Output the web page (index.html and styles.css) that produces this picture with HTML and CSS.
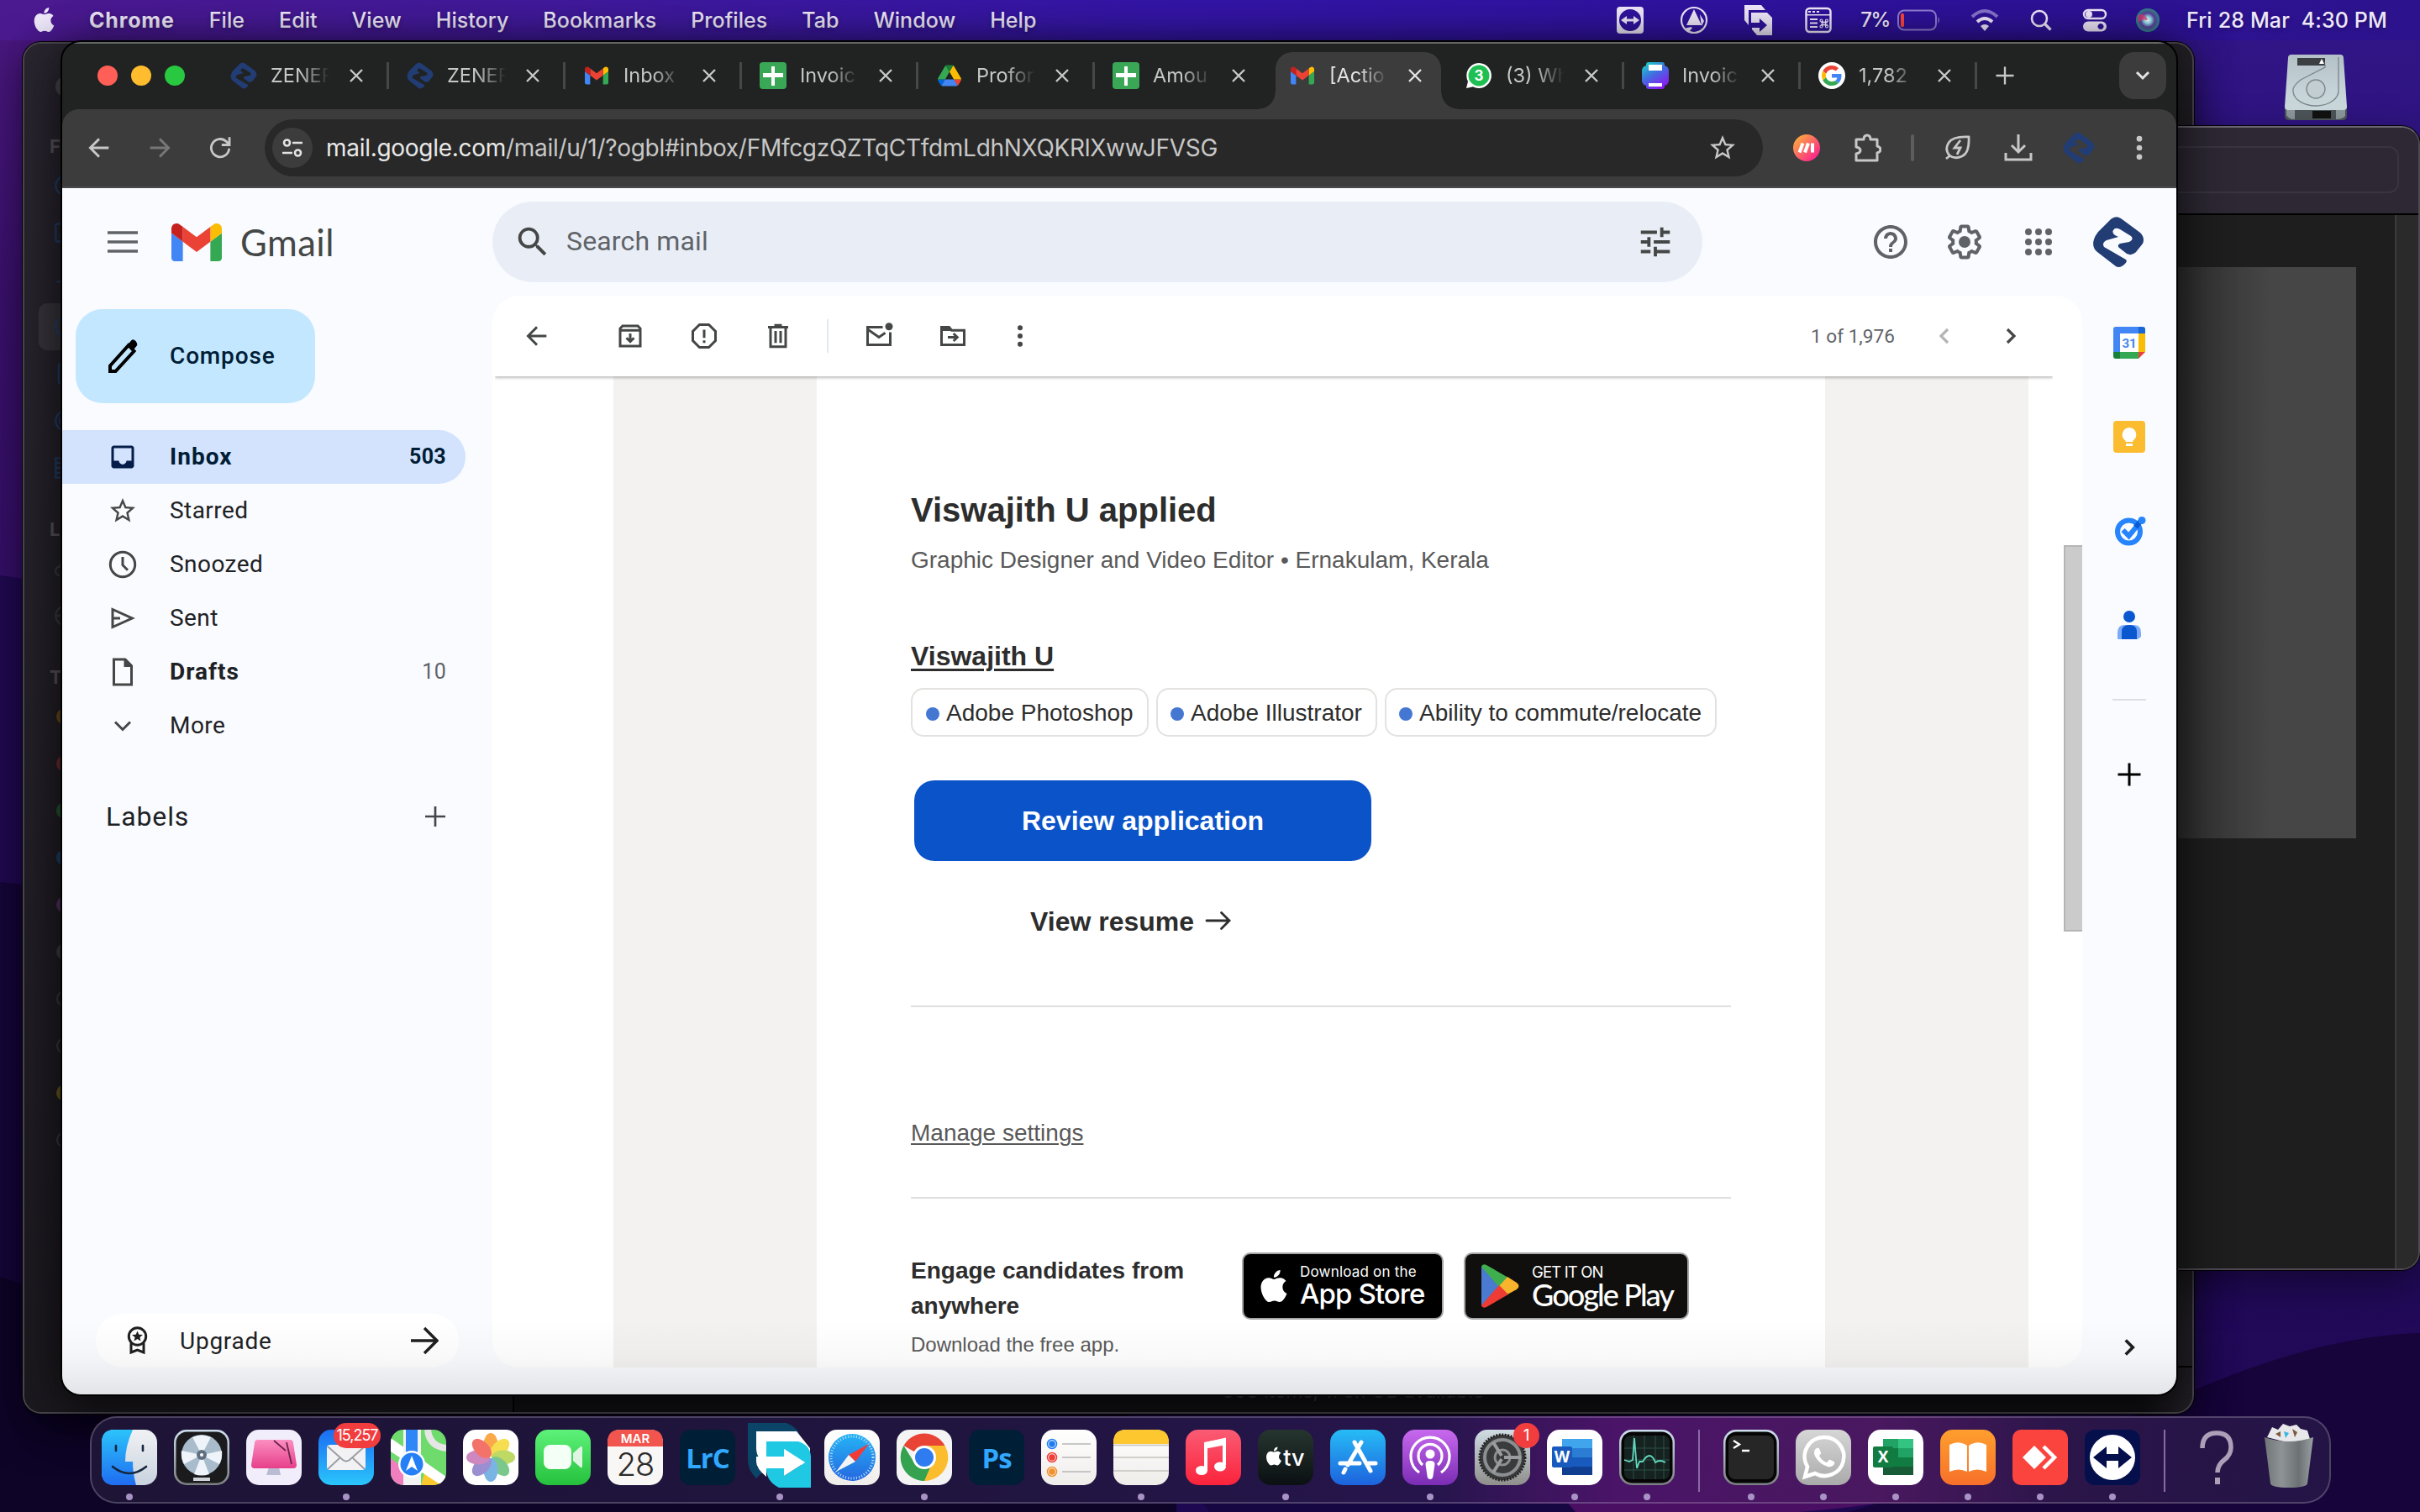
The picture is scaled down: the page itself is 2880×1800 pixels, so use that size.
FILE: index.html
```html
<!DOCTYPE html>
<html lang="en">
<head>
<meta charset="utf-8">
<title>Inbox - Gmail</title>
<link rel="stylesheet" href="styles.css">
</head>
<body>
<svg class="defs" width="0" height="0">
  <defs>
    <linearGradient id="finderBlue" x2="0" y2="1"><stop stop-color="#2bc4fb"/><stop offset="1" stop-color="#1f6cf0"/></linearGradient>
    <linearGradient id="gray" x2="0" y2="1"><stop stop-color="#f0f1f4"/><stop offset="1" stop-color="#c9d3de"/></linearGradient>
    <linearGradient id="white" x2="0" y2="1"><stop stop-color="#fff"/><stop offset="1" stop-color="#efedea"/></linearGradient>
    <linearGradient id="pink" x2="0" y2="1"><stop stop-color="#fb8fc0"/><stop offset="1" stop-color="#e73f8a"/></linearGradient>
    <linearGradient id="mailBlue" x2="0" y2="1"><stop stop-color="#1c6cf2"/><stop offset="1" stop-color="#2ac6fc"/></linearGradient>
    <linearGradient id="green" x2="0" y2="1"><stop stop-color="#5df27a"/><stop offset="1" stop-color="#25c13c"/></linearGradient>
    <linearGradient id="storeBlue" x2="0" y2="1"><stop stop-color="#26bcf6"/><stop offset="1" stop-color="#1d62dd"/></linearGradient>
    <linearGradient id="safari" x2="0" y2="1"><stop stop-color="#25b4f5"/><stop offset="1" stop-color="#2567e0"/></linearGradient>
    <linearGradient id="music" x2="0" y2="1"><stop stop-color="#fb5b74"/><stop offset="1" stop-color="#fa233b"/></linearGradient>
    <linearGradient id="tv" x2="0" y2="1"><stop stop-color="#26352f"/><stop offset="1" stop-color="#0b1012"/></linearGradient>
    <linearGradient id="pod" x2="0" y2="1"><stop stop-color="#c869ee"/><stop offset="1" stop-color="#7a2db4"/></linearGradient>
    <linearGradient id="sys" x2="0" y2="1"><stop stop-color="#d0dce4"/><stop offset="1" stop-color="#8f8f8c"/></linearGradient>
    <linearGradient id="wa" x2="0" y2="1"><stop stop-color="#d6d6d6"/><stop offset="1" stop-color="#aaa"/></linearGradient>
    <linearGradient id="books" x2="0" y2="1"><stop stop-color="#ff9f2e"/><stop offset="1" stop-color="#f7702a"/></linearGradient>
    <linearGradient id="rim" x2="0" y2="1"><stop stop-color="#cfe0ee"/><stop offset="1" stop-color="#7c7f82"/></linearGradient>
    <linearGradient id="trash" x2="1" y2="0"><stop stop-color="#707577"/><stop offset=".35" stop-color="#8e9496"/><stop offset=".7" stop-color="#6c7274"/><stop offset="1" stop-color="#9aa0a2"/></linearGradient>
    <linearGradient id="make" x2="1" y2="1"><stop offset=".1" stop-color="#fdab3d"/><stop offset=".9" stop-color="#fb1f8f"/></linearGradient>
    <linearGradient id="printer" gradientUnits="userSpaceOnUse" x1="0" y1="0" x2="20" y2="32"><stop stop-color="#14e0c4"/><stop offset=".5" stop-color="#3f6fe0"/><stop offset="1" stop-color="#8a1cf0"/></linearGradient>
    <linearGradient id="hdd" x2="0" y2="1"><stop stop-color="#b4c0c7"/><stop offset="1" stop-color="#cfdde1"/></linearGradient>
    <radialGradient id="siri"><stop stop-color="#fff"/><stop offset=".3" stop-color="#8fd8e8"/><stop offset=".6" stop-color="#5a3f9a"/><stop offset="1" stop-color="#2f8a8a"/></radialGradient>
  </defs>
  <symbol id="apple" viewBox="0 0 24 24"><path d="M12.152 6.896c-.948 0-2.415-1.078-3.96-1.04-2.04.027-3.91 1.183-4.961 3.014-2.117 3.675-.546 9.103 1.519 12.09 1.013 1.454 2.208 3.09 3.792 3.039 1.52-.065 2.09-.987 3.935-.987 1.831 0 2.35.987 3.96.948 1.637-.026 2.676-1.48 3.676-2.948 1.156-1.688 1.636-3.325 1.662-3.415-.039-.013-3.182-1.221-3.22-4.857-.026-3.04 2.48-4.494 2.597-4.559-1.429-2.09-3.623-2.324-4.39-2.376-2-.156-3.675 1.09-4.61 1.09zM15.53 3.83c.843-1.012 1.4-2.427 1.245-3.83-1.207.052-2.662.805-3.532 1.818-.78.896-1.454 2.338-1.273 3.714 1.338.104 2.715-.688 3.559-1.701"/></symbol>
  <symbol id="gmail" viewBox="52 42 88 66"><path fill="#4285f4" d="M58 108h14V74L52 59v43c0 3.32 2.69 6 6 6"/><path fill="#34a853" d="M120 108h14c3.32 0 6-2.69 6-6V59l-20 15"/><path fill="#fbbc04" d="M120 48v26l20-15v-8c0-7.42-8.47-11.65-14.4-7.2"/><path fill="#ea4335" d="M72 74V48l24 18 24-18v26L96 92"/><path fill="#c5221f" d="M52 51v8l20 15V48l-5.6-4.2c-5.94-4.45-14.4-.22-14.4 7.2"/></symbol>
  <symbol id="zene" viewBox="0 0 62 62"><path fill="#223c74" fill-rule="evenodd" d="M22 4Q28-1 34 3L57 20Q63 26 60 33L52 43Q47 48 41 45L32 38Q29 35 33 33L44 31Q50 28 46 24L33 16Q27 13 25 17Q23 20 27 23L31 25L17 29Q11 32 14 37L40 52Q42 54 39 57Q33 63 28 60L6 43Q-1 37 2 28Q3 24 7 19Z"/></symbol>
  <symbol id="sheets" viewBox="0 0 32 32"><rect width="32" height="32" rx="4" fill="#3aa757"/><path fill="#fff" d="M14 5h4v8h10v5H18v10h-4V18H4v-5h10z"/></symbol>
  <symbol id="drive" viewBox="0 0 87.3 78"><path fill="#0066da" d="m6.6 66.85 3.85 6.65c.8 1.4 1.95 2.5 3.3 3.3l13.75-23.8h-27.5c0 1.55.4 3.1 1.2 4.5z"/><path fill="#34a853" d="m43.65 25-13.75-23.8c-1.35.8-2.5 1.9-3.3 3.3l-25.4 44a9.06 9.06 0 0 0 -1.2 4.5h27.5z"/><path fill="#ea4335" d="m73.55 76.8c1.35-.8 2.5-1.9 3.3-3.3l1.6-2.75 7.65-13.25c.8-1.4 1.2-2.95 1.2-4.5h-27.5l5.85 11.5z"/><path fill="#188038" d="m43.65 25 13.75-23.8c-1.35-.8-2.9-1.2-4.5-1.2h-18.5c-1.6 0-3.15.45-4.5 1.2z"/><path fill="#4285f4" d="m59.8 53h-32.3l-13.75 23.8c1.35.8 2.9 1.2 4.5 1.2h50.8c1.6 0 3.15-.45 4.5-1.2z"/><path fill="#fbbc04" d="m73.4 26.5-12.7-22c-.8-1.4-1.95-2.5-3.3-3.3l-13.75 23.8 16.15 28h27.45c0-1.55-.4-3.1-1.2-4.5z"/></symbol>
  <symbol id="google" viewBox="0 0 48 48"><path fill="#ea4335" d="M24 9.5c3.54 0 6.71 1.22 9.21 3.6l6.85-6.85C35.9 2.38 30.47 0 24 0 14.62 0 6.51 5.38 2.56 13.22l7.98 6.19C12.43 13.72 17.74 9.5 24 9.5z"/><path fill="#4285f4" d="M46.98 24.55c0-1.57-.15-3.09-.38-4.55H24v9.02h12.94c-.58 2.96-2.26 5.48-4.78 7.18l7.73 6c4.51-4.18 7.09-10.36 7.09-17.65z"/><path fill="#fbbc05" d="M10.53 28.59c-.48-1.45-.76-2.99-.76-4.59s.27-3.14.76-4.59l-7.98-6.19C.92 16.46 0 20.12 0 24c0 3.88.92 7.54 2.56 10.78l7.97-6.19z"/><path fill="#34a853" d="M24 48c6.48 0 11.93-2.13 15.89-5.81l-7.73-6c-2.15 1.45-4.92 2.3-8.16 2.3-6.26 0-11.57-4.22-13.47-9.91l-7.98 6.19C6.51 42.62 14.62 48 24 48z"/></symbol>
  <symbol id="x" viewBox="0 0 16 16"><path d="M1 1l14 14M15 1L1 15" stroke="currentColor" stroke-width="2.4" fill="none"/></symbol>
  <symbol id="back" viewBox="0 0 24 24"><path d="M20 12H5M12 4.5L4.5 12l7.5 7.5" stroke="currentColor" stroke-width="2" fill="none"/></symbol>
  <symbol id="star" viewBox="0 0 24 24"><path fill="currentColor" d="M22 9.24l-7.19-.62L12 2 9.19 8.63 2 9.24l5.46 4.73L5.82 21 12 17.27 18.18 21l-1.63-7.03L22 9.24zM12 15.4l-3.76 2.27 1-4.28-3.32-2.88 4.38-.38L12 6.1l1.71 4.04 4.38.38-3.32 2.88 1 4.28L12 15.4z"/></symbol>
  <symbol id="dots" viewBox="0 0 24 24"><g fill="currentColor"><circle cx="12" cy="5.5" r="2"/><circle cx="12" cy="12" r="2"/><circle cx="12" cy="18.5" r="2"/></g></symbol>
  <symbol id="plus" viewBox="0 0 24 24"><path d="M12 3v18M3 12h18" stroke="currentColor" stroke-width="2" fill="none"/></symbol>
  <symbol id="phone" viewBox="0 0 24 24"><path d="M17.47 14.38c-.3-.15-1.76-.87-2.03-.97-.27-.1-.47-.15-.67.15-.2.3-.77.97-.94 1.16-.17.2-.35.22-.64.08-.3-.15-1.26-.46-2.39-1.48-.88-.79-1.48-1.76-1.65-2.06-.17-.3-.02-.46.13-.6.13-.14.3-.35.45-.52.15-.17.2-.3.3-.5.1-.2.05-.37-.03-.52-.07-.15-.67-1.61-.92-2.21-.24-.58-.49-.5-.67-.51h-.57c-.2 0-.52.07-.79.37-.27.3-1.04 1.02-1.04 2.48s1.07 2.88 1.21 3.07c.15.2 2.1 3.2 5.08 4.49.71.3 1.26.49 1.69.63.71.23 1.36.19 1.87.12.57-.09 1.76-.72 2.01-1.41.25-.69.25-1.29.17-1.41-.07-.12-.27-.2-.57-.35z"/></symbol>
</svg>

<svg class="wallpaper" viewBox="0 0 2880 1800" preserveAspectRatio="none">
  <defs><linearGradient id="wp" x2="0" y2="1"><stop stop-color="#4a1880"/><stop offset=".2" stop-color="#3a116c"/><stop offset="1" stop-color="#25085a"/></linearGradient>
  <linearGradient id="wr" x2="0" y2="1"><stop stop-color="#311587"/><stop offset="1" stop-color="#1f0852"/></linearGradient></defs>
  <rect width="2880" height="1800" fill="url(#wp)"/>
  <path fill="#200a50" d="M0 685q60 8 200 30V1800H0z"/>
  <path fill="#150638" d="M0 1050l200 20V1800H0z"/>
  <rect x="1400" width="1480" height="1800" fill="url(#wr)"/>
  <path fill="#0e0427" d="M0 1520q200 60 500 280H0zM0 1680h1400v120H0z"/>
  <path fill="#160642" d="M1340 1680h600v120h-500z"/>
  <path fill="#16043a" d="M2880 1587Q2760 1590 2600 1660T2200 1800H2880z"/>
  <path fill="#4a0f63" d="M1840 1760h500q-60 30-200 40h-265z"/>
</svg>

<header class="menubar">
  <nav class="menus"><svg class="apple-mark"><use href="#apple"/></svg><b>Chrome</b><span>File</span><span>Edit</span><span>View</span><span>History</span><span>Bookmarks</span><span>Profiles</span><span>Tab</span><span>Window</span><span>Help</span></nav>
  <div class="status">
    <svg width="34" height="34" viewBox="0 0 34 34"><path fill-rule="evenodd" d="M5 1h24q4 0 4 4v24q0 4-4 4H5q-4 0-4-4V5q0-4 4-4zM17 4a13 13 0 1 0 0 26 13 13 0 1 0 0-26zM6 17l7-5v3.5h8V12l7 5-7 5v-3.5h-8V22z"/></svg>
    <svg width="34" height="34" viewBox="0 0 34 34"><circle cx="17" cy="17" r="15" fill="none" stroke="#eee8fa" stroke-width="2.2"/><path d="M17 4l9 19H8zM6 27q8-3 9-1l-4 5zM24 10l5 8-3 6z"/></svg>
    <svg width="36" height="38" viewBox="0 0 36 38"><path d="M2 1h20l5 6H7v18l-5-6z"/><path fill-rule="evenodd" d="M10 10h19l6 6v21H17l-6-7V28h9v5l9-8-9-8v5H10z"/></svg>
    <svg width="32" height="32" viewBox="0 0 32 32"><rect x="1.5" y="2" width="29" height="28" rx="4" fill="none" stroke="#eee8fa" stroke-width="2.5"/><path d="M4 5h3v2H4zM9 5h3v2H9zM14 5h3v2h-3zM2 9h28v1.500H2zM6 14h9v2H6zM6 18.500h9v2H6zM6 23h9v2H6z"/><path fill="none" stroke="#eee8fa" stroke-width="1.300" d="M21 17v6M24.500 17v6M19 18.500h8M19 21.500h8"/><g fill="none" stroke="#eee8fa" stroke-width="1.200"><circle cx="19.500" cy="16.500" r="1.500"/><circle cx="26" cy="16.500" r="1.500"/><circle cx="19.500" cy="23.500" r="1.500"/><circle cx="26" cy="23.500" r="1.500"/></g></svg>
    <span class="pct">7%</span>
    <svg width="52" height="26" viewBox="0 0 52 26"><rect x="1" y="1.5" width="45" height="23" rx="7" fill="none" stroke="#8f7cd0" stroke-width="2"/><rect x="4" y="5" width="4" height="16" rx="1.5" fill="#ff453a"/><path fill="#8f7cd0" d="M48.5 9q3 4 0 8z"/></svg>
    <svg width="36" height="28" viewBox="0 0 36 28"><g fill="none" stroke-width="4"><path stroke="#8573cc" d="M3 10q15-14 30 0"/><path stroke="#eee8fa" d="M9 16q9-8 18 0"/></g><path d="M13 21q5-4 10 0l-5 6z"/></svg>
    <svg width="28" height="28" viewBox="0 0 28 28"><circle cx="12" cy="12" r="9" fill="none" stroke="#eee8fa" stroke-width="2.6"/><path d="M18.5 18.5l7 7" stroke="#eee8fa" stroke-width="3.2"/></svg>
    <svg width="30" height="28" viewBox="0 0 30 28"><rect x="2" y="2" width="26" height="10" rx="5" fill="none" stroke="#eee8fa" stroke-width="2.4"/><circle cx="8" cy="7" r="4"/><path fill-rule="evenodd" d="M7 15.5h16a6 6 0 0 1 0 12H7a6 6 0 0 1 0-12zM22 18a3.5 3.5 0 1 0 .01 0z"/></svg>
    <svg width="30" height="30" viewBox="0 0 30 30"><circle cx="15" cy="15" r="14" fill="url(#siri)"/><path fill="#e8356b" opacity=".7" d="M3 10q8-6 12 5-8-2-11 3z"/></svg>
    <time>Fri 28 Mar&nbsp; 4:30 PM</time>
  </div>
</header>

<svg class="hdd" viewBox="0 0 76 80"><path fill="#4d565a" d="M1 62h74v12q0 5-5 5H6q-5 0-5-5z"/><path fill="#8d999e" d="M3 66h10v12q-8 0-10-5zM62 66h11v8q-3 4-11 4z"/><path fill="#111" d="M34 68h22v9H34z"/><path fill="url(#hdd)" d="M9 1h58q4 0 4 4l4 58q0 4-4 4H5q-4 0-4-4L5 5q0-4 4-4z"/><rect x="16" y="5" width="33" height="9" fill="#3b3f42"/><path fill="#fff" d="M45 6l3 6h-6z"/><g fill="none" stroke="#7e898f" stroke-width="1.4"><path d="M49 13v3L20 31Q9 40 11 45a27 18 0 0 0 54-2V4"/><circle cx="38" cy="42" r="11" fill="#c3ced3"/></g></svg>

<section class="window finder">
  <aside class="finder-side">
    <i class="tl"></i>
    <h6>Favourites</h6>
    <p><svg viewBox="0 0 24 24"><circle cx="12" cy="12" r="10"/></svg></p><p><svg viewBox="0 0 24 24"><rect x="2" y="3" width="20" height="18" rx="2"/><path d="M6 15h12"/></svg></p><p><svg viewBox="0 0 24 24"><path d="M3 14h10l6 5M12 6v8"/></svg></p><p class="on"><svg viewBox="0 0 24 24"><circle cx="12" cy="12" r="10"/></svg></p><p><svg viewBox="0 0 24 24"><rect x="5" y="2" width="15" height="20" rx="2"/></svg></p><p><svg viewBox="0 0 24 24"><circle cx="12" cy="12" r="10"/><circle cx="12" cy="12" r="6"/></svg></p><p><svg viewBox="0 0 24 24"><path d="M2 2h20v20H2zM8 2v20M2 7h6M2 12h6M2 17h6"/></svg></p>
    <h6>Locations</h6>
    <p class="dim"><svg viewBox="0 0 24 24"><path d="M6 19q-5-1-4-6 1-3 4-3 2-7 9-5"/></svg></p><p class="dim"><svg viewBox="0 0 24 24"><circle cx="12" cy="12" r="10"/><path d="M2 12h20M12 2q-8 10 0 20"/></svg></p>
    <h6>Tags</h6>
    <p><i class="tag t1"></i></p><p><i class="tag t2"></i></p><p><i class="tag t3"></i></p><p><i class="tag t4"></i></p><p><i class="tag t5"></i></p><p><i class="tag t6"></i></p><p><i class="tag t0"></i></p><p><i class="tag t0"></i></p><p><i class="tag t7"></i></p><p><i class="tag t0"></i></p>
  </aside>
  <div class="finder-status">503 items, 170.1 GB available</div>
</section>

<section class="window preview">
  <div class="preview-bar"><div class="preview-field"></div></div>
  <div class="preview-body"><div class="preview-page"></div><div class="preview-scroll"></div></div>
</section>

<main class="window chrome">
  <div class="tabstrip">
    <div class="lights"><i></i><i></i><i></i></div>
    <div class="tab"><svg><use href="#zene"/></svg><span>ZENER</span><svg class="x"><use href="#x"/></svg></div>
    <div class="tab"><svg><use href="#zene"/></svg><span>ZENER</span><svg class="x"><use href="#x"/></svg></div>
    <div class="tab"><svg class="sm"><use href="#gmail"/></svg><span>Inbox</span><svg class="x"><use href="#x"/></svg></div>
    <div class="tab"><svg><use href="#sheets"/></svg><span>Invoic</span><svg class="x"><use href="#x"/></svg></div>
    <div class="tab"><svg class="sm"><use href="#drive"/></svg><span>Profor</span><svg class="x"><use href="#x"/></svg></div>
    <div class="tab nosep"><svg><use href="#sheets"/></svg><span>Amou</span><svg class="x"><use href="#x"/></svg></div>
    <div class="tab active"><svg class="sm"><use href="#gmail"/></svg><span>[Actio</span><svg class="x"><use href="#x"/></svg></div>
    <div class="tab"><svg viewBox="0 0 32 32"><path fill="#fff" d="M16 1a15 15 0 1 1-7 28.3L1 31l2-8A15 15 0 0 1 16 1z"/><circle cx="16" cy="16" r="12.5" fill="#1fbf53"/><text x="16" y="22" class="badge-n">3</text></svg><span>(3) Wh</span><svg class="x"><use href="#x"/></svg></div>
    <div class="tab"><svg viewBox="0 0 32 32"><rect y="4" width="32" height="24" rx="6" fill="url(#printer)"/><rect x="5" y="0" width="22" height="32" rx="3" fill="url(#printer)"/><path fill="#fff" d="M8 3h16v7H8zM8 25h16v4H8z"/></svg><span>Invoic</span><svg class="x"><use href="#x"/></svg></div>
    <div class="tab"><svg viewBox="0 0 32 32"><circle cx="16" cy="16" r="16" fill="#fff"/><use href="#google" x="4" y="4" width="24" height="24"/></svg><span>1,782</span><svg class="x"><use href="#x"/></svg></div>
    <svg class="newtab"><use href="#plus"/></svg>
    <div class="tabdrop"><svg width="20" height="12" viewBox="0 0 20 12"><path d="M3 2l7 7 7-7" fill="none" stroke="#e3e3e3" stroke-width="3"/></svg></div>
  </div>
  <div class="toolbar">
    <div class="tb"><svg><use href="#back"/></svg></div>
    <div class="tb off"><svg class="flip"><use href="#back"/></svg></div>
    <div class="tb"><svg viewBox="0 0 24 24"><path d="M19.500 12.500a7.500 7.500 0 1 1-2.300-5.800L19.500 9M19.800 3v6.500h-6.500" fill="none" stroke="currentColor" stroke-width="2"/></svg></div>
    <div class="omnibox">
      <div class="site"><svg width="26" height="26" viewBox="0 0 26 26"><g fill="none" stroke="#e3e3e3" stroke-width="2.6"><circle cx="6.5" cy="7" r="3.5"/><path d="M13 7h12M1 19h12"/><circle cx="19.5" cy="19" r="3.5"/></g></svg></div>
      <span class="url"><b>mail.google.com</b>/mail/u/1/?ogbl#inbox/FMfcgzQZTqCTfdmLdhNXQKRlXwwJFVSG</span>
      <svg class="bm"><use href="#star"/></svg>
    </div>
    <div class="tb first"><svg class="mk" viewBox="0 0 32 32"><circle cx="16" cy="16" r="16" fill="url(#make)"/><path d="M7.500 21.500l4-11M14 21.500l4-11M23 21.500v-11" stroke="#fff" stroke-width="4"/></svg></div>
    <div class="tb"><svg viewBox="0 0 34 34"><path fill="none" stroke="currentColor" stroke-width="3" stroke-linejoin="round" d="M4 7h9q0-5 4-5t4 5h8v8q4 1 4 4t-4 4v9H4v-8q5-1 5-4t-5-4z"/></svg></div>
    <div class="vsep"></div>
    <div class="tb"><svg viewBox="0 0 34 34"><g fill="none" stroke="currentColor" stroke-width="2.8"><path d="M30 4Q11 3 6 11t1 15q6 5 15 1T30 4zM3 30l5-4"/><path d="M20 8l-7 9h7l-4 8"/></g></svg></div>
    <div class="tb"><svg viewBox="0 0 34 34"><path fill="none" stroke="currentColor" stroke-width="3" d="M17 1v21M9 14l8 8 8-8M2 23v8h30v-8"/></svg></div>
    <div class="tb"><svg class="zb"><use href="#zene"/></svg></div>
    <div class="tb"><svg class="kebab"><use href="#dots"/></svg></div>
  </div>

  <div class="gmail">
    <div class="head">
      <svg class="burger" viewBox="0 0 36 26"><path d="M0 2h36M0 13h36M0 24h36" stroke="#5f6368" stroke-width="3.4"/></svg>
      <svg class="logo"><use href="#gmail"/></svg>
      <span class="brand">Gmail</span>
      <div class="search"><svg viewBox="0 0 24 24"><path d="M15.5 14h-.79l-.28-.27A6.471 6.471 0 0 0 16 9.5 6.5 6.5 0 1 0 9.5 16c1.61 0 3.09-.59 4.23-1.57l.27.28v.79l5 4.99L20.49 19l-4.99-5zm-6 0C7.01 14 5 11.99 5 9.5S7.01 5 9.5 5 14 7.01 14 9.5 11.99 14 9.5 14z"/></svg><span>Search mail</span><svg class="tune" viewBox="0 0 24 24"><path d="M3 17v2h6v-2H3zM3 5v2h10V5H3zm10 16v-2h8v-2h-8v-2h-2v6h2zM7 9v2H3v2h4v2h2V9H7zm14 4v-2H11v2h10zm-6-4h2V7h4V5h-4V3h-2v6z"/></svg></div>
      <div class="hicons">
        <svg viewBox="0 0 24 24"><path d="M11 18h2v-2h-2v2zm1-16C6.48 2 2 6.48 2 12s4.48 10 10 10 10-4.48 10-10S17.52 2 12 2zm0 18c-4.41 0-8-3.59-8-8s3.59-8 8-8 8 3.59 8 8-3.59 8-8 8zm0-14c-2.21 0-4 1.79-4 4h2c0-1.1.9-2 2-2s2 .9 2 2c0 2-3 1.75-3 5h2c0-2.25 3-2.5 3-5 0-2.21-1.79-4-4-4z"/></svg>
        <svg viewBox="0 0 24 24"><path d="M13.85 22.25h-3.7c-.74 0-1.36-.54-1.45-1.27l-.27-1.89c-.27-.14-.53-.29-.79-.46l-1.8.72c-.7.26-1.47-.03-1.81-.65L2.2 15.53c-.35-.66-.2-1.44.36-1.88l1.53-1.19c-.01-.15-.02-.3-.02-.46 0-.15.01-.31.02-.46l-1.52-1.19c-.59-.45-.74-1.26-.37-1.88l1.85-3.19c.34-.62 1.11-.9 1.79-.63l1.81.73c.26-.17.52-.32.78-.46l.27-1.91c.09-.7.71-1.25 1.44-1.25h3.7c.74 0 1.36.54 1.45 1.27l.27 1.89c.27.14.53.29.79.46l1.8-.72c.71-.26 1.48.03 1.82.65l1.84 3.18c.36.66.2 1.44-.36 1.88l-1.52 1.19c.01.15.02.3.02.46s-.01.31-.02.46l1.52 1.19c.56.45.72 1.23.37 1.86l-1.86 3.22c-.34.62-1.11.9-1.8.63l-1.8-.72c-.26.17-.52.32-.78.46l-.27 1.91c-.1.68-.72 1.22-1.46 1.22zm-3.23-2h2.76l.37-2.55.53-.22c.44-.18.88-.44 1.34-.78l.45-.34 2.38.96 1.38-2.4-2.03-1.58.07-.56c.03-.26.06-.51.06-.78s-.03-.53-.06-.78l-.07-.56 2.03-1.58-1.39-2.4-2.39.96-.45-.35c-.42-.32-.87-.58-1.33-.77l-.52-.22-.37-2.55h-2.76l-.37 2.55-.53.21c-.44.19-.88.44-1.34.79l-.45.33-2.38-.95-1.39 2.39 2.03 1.58-.07.56a7 7 0 0 0-.06.79c0 .26.02.53.06.78l.07.56-2.03 1.58 1.38 2.4 2.39-.96.45.35c.43.33.86.58 1.33.77l.53.22.38 2.55z"/><circle cx="12" cy="12" r="3.5"/></svg>
        <svg viewBox="0 0 24 24"><g><circle cx="6" cy="6" r="2"/><circle cx="12" cy="6" r="2"/><circle cx="18" cy="6" r="2"/><circle cx="6" cy="12" r="2"/><circle cx="12" cy="12" r="2"/><circle cx="18" cy="12" r="2"/><circle cx="6" cy="18" r="2"/><circle cx="12" cy="18" r="2"/><circle cx="18" cy="18" r="2"/></g></svg>
        <svg class="avatar"><use href="#zene"/></svg>
      </div>
    </div>
    <aside class="nav">
      <div class="compose"><svg viewBox="0 0 36 42"><path fill="none" stroke="#000" stroke-width="4" d="M2.500 32.500V39H9L31 15l-6.500-7z"/><path d="M23 8l5-6q2-2 5 1 3 4 1 6l-5 6z"/></svg><span>Compose</span></div>
      <div class="row sel"><svg viewBox="0 0 24 24"><path d="M19 3H5c-1.1 0-2 .9-2 2v14c0 1.1.9 2 2 2h14c1.1 0 2-.9 2-2V5c0-1.1-.9-2-2-2zm0 12h-4c0 1.66-1.34 3-3 3s-3-1.34-3-3H5V5h14v10z"/><path d="M4 15.500h4.500q3.500 5 7 0H20V20H4z"/></svg><b>Inbox</b><b class="n">503</b></div>
      <div class="row"><svg><use href="#star"/></svg><span>Starred</span></div>
      <div class="row"><svg viewBox="0 0 24 24"><g fill="none" stroke="#444746" stroke-width="2"><circle cx="12" cy="12" r="9.8"/><path d="M12 6v6.500l4 4"/></g></svg><span>Snoozed</span></div>
      <div class="row"><svg viewBox="0 0 24 24"><path fill="none" stroke="#444746" stroke-width="2" d="M4 5v14l15.500-7zM4 12h6"/></svg><span>Sent</span></div>
      <div class="row"><svg viewBox="0 0 24 24"><path fill="none" stroke="#444746" stroke-width="2" d="M5 2h9l5 5v15H5z"/><path d="M13 2h1l6 6h-7z"/></svg><b>Drafts</b><span class="n">10</span></div>
      <div class="row"><svg viewBox="0 0 24 24"><path fill="none" stroke="#444746" stroke-width="2" d="M6 9l6 6 6-6"/></svg><span>More</span></div>
      <div class="labels">Labels<svg><use href="#plus"/></svg></div>
      <div class="upgrade"><svg class="medal" viewBox="0 0 26 34"><circle cx="13" cy="12" r="10.2" fill="none" stroke="#1f1f1f" stroke-width="3"/><path d="M13 5.500l1.800 4.300 4.700.3-3.600 3 1.100 4.500-4-2.500-4 2.500 1.100-4.500-3.600-3 4.700-.3z"/><path fill="none" stroke="#1f1f1f" stroke-width="3" d="M5.500 20v11l7.500-3 7.500 3V20"/></svg><span>Upgrade</span><svg class="arr" viewBox="0 0 34 34"><path fill="none" stroke="#1f1f1f" stroke-width="3.400" d="M1 17h30M17 2l15 15-15 15"/></svg></div>
    </aside>
    <section class="panel">
      <div class="acts">
        <svg class="a1"><use href="#back"/></svg>
        <svg viewBox="0 0 24 24"><path fill="none" stroke="#444746" stroke-width="2" d="M4 6l2-2h12l2 2v14H4zM4 7.500h16M12 10v6M9 13.500l3 3 3-3"/></svg>
        <svg viewBox="0 0 24 24"><path fill="none" stroke="#444746" stroke-width="2" d="M8.300 3h7.400L21 8.300v7.400L15.700 21H8.300L3 15.700V8.300zM12 7v6.500M12 15.500v2"/></svg>
        <svg viewBox="0 0 24 24"><path fill="none" stroke="#444746" stroke-width="2" d="M4 5h16M9 3.500h6M6 5v15.500h12V5M10 8v9.500M14 8v9.500"/></svg>
        <i></i>
        <svg viewBox="0 0 24 24"><path fill="none" stroke="#444746" stroke-width="2" d="M15 5H3v14h18V9M3.500 7l8.500 6 5-3.500"/><circle cx="20" cy="4.500" r="3"/></svg>
        <svg viewBox="0 0 24 24"><path fill="none" stroke="#444746" stroke-width="2" d="M3 19V5h6l2 2.500h10V19zM8 13h7M12.500 10l3 3-3 3"/><path d="M3 4h6l3 4H3z"/></svg>
        <svg class="a8"><use href="#dots"/></svg>
        <span class="count">1 of 1,976</span>
        <svg class="pg" viewBox="0 0 24 24"><path fill="none" stroke="#b4b5b5" stroke-width="2.400" d="M15 6l-6 6 6 6"/></svg>
        <svg class="pg nx" viewBox="0 0 24 24"><path fill="none" stroke="#444746" stroke-width="2.400" d="M9 6l6 6-6 6"/></svg>
      </div>
      <div class="mail">
        <article>
          <h1>Viswajith U applied</h1>
          <p class="sub">Graphic Designer and Video Editor • Ernakulam, Kerala</p>
          <a class="name">Viswajith U</a>
          <div class="chips"><span class="c1">Adobe Photoshop</span><span class="c2">Adobe Illustrator</span><span class="c3">Ability to commute/relocate</span></div>
          <div class="review">Review application</div>
          <div class="resume">View resume<svg width="32" height="24" viewBox="0 0 32 24"><path fill="none" stroke="#2d2d2d" stroke-width="2.800" stroke-linecap="round" d="M2 12h27M19.500 2.500L29 12l-9.500 9.500"/></svg></div>
          <hr class="h1r">
          <a class="manage">Manage settings</a>
          <hr class="h2r">
          <div class="foot">
            <div class="engage"><b>Engage candidates from<br>anywhere</b><span>Download the free app.</span></div>
            <div class="badge as"><svg width="38" height="46"><use href="#apple"/></svg><div><small>Download on the</small><strong>App Store</strong></div></div>
            <div class="badge gp"><svg width="48" height="54" viewBox="0 0 48 54"><path fill="#4a7bd0" d="M2 3v48l22-24z"/><path fill="#3fae4d" d="M2 4q1-4 6-2l26 15-11 11z"/><path fill="#f7b42c" d="M33 16l11 7q5 4 0 8l-11 6-10-10z"/><path fill="#ee3b33" d="M2 50q1 4 6 2l26-15-11-11z"/></svg><div><small>GET IT ON</small><strong>Google Play</strong></div></div>
          </div>
        </article>
        <div class="thumb"></div>
      </div>
    </section>
    <aside class="side">
      <svg viewBox="0 0 40 40"><path fill="#4285f4" d="M4 1h27v8H9v22H1V4q0-3 3-3z"/><path fill="#1967d2" d="M31 1h5q3 0 3 3v5h-8z"/><path fill="#fbbc04" d="M31 9h8v22h-8z"/><path fill="#34a853" d="M9 31h22v8H9z"/><path fill="#188038" d="M1 31h8v8H4q-3 0-3-3z"/><path fill="#ea4335" d="M31 31h8l-8 8z"/><path fill="#fff" d="M9 9h22v22H9z"/><text x="20" y="26" class="cal31">31</text></svg>
      <svg viewBox="0 0 40 40"><rect x="1" y="1" width="38" height="38" rx="4" fill="#fbbc2f"/><path fill="#fff" d="M20 9a8.500 8.500 0 0 1 4.500 15.500V26h-9v-1.500A8.500 8.500 0 0 1 20 9zM16 28h8v3h-8z"/></svg>
      <svg viewBox="0 0 40 40"><circle cx="19.500" cy="21" r="13.500" fill="none" stroke="#2684fc" stroke-width="6"/><path fill="none" stroke="#2684fc" stroke-width="6" d="M12.500 19l7 7L31 12"/><path stroke="#0a5bd3" stroke-width="6" d="M27.500 15.500L33 9"/><circle cx="35" cy="7.500" r="4.500" fill="#2684fc"/></svg>
      <svg viewBox="0 0 40 40"><circle cx="20" cy="10" r="7" fill="#0b57d0"/><path fill="#7baaf7" d="M6 37V29q0-9 9-9h10q9 0 9 9v5l-4 3z"/><path fill="#0b57d0" d="M11 37V28q0-8 9-8t9 8v9z"/></svg>
      <i></i>
      <svg class="sp"><use href="#plus"/></svg>
      <svg class="sc" viewBox="0 0 24 24"><path fill="none" stroke="#1f1f1f" stroke-width="2.600" d="M9 6l6 6-6 6"/></svg>
    </aside>
    <div class="shade"></div>
  </div>
</main>

<footer class="dock">
  <div class="app run"><svg viewBox="0 0 66 66"><rect width="66" height="66" rx="15" fill="url(#gray)"/><path fill="url(#finderBlue)" d="M15 0h22Q28 20 28 38h9q0 14 4 28H15Q0 66 0 51V15Q0 0 15 0z"/><path fill="none" stroke="#14263f" stroke-width="2.600" stroke-linecap="round" d="M13 44q20 16 40 0M17 19v6M49 19v6"/></svg></div>
  <div class="app"><svg viewBox="0 0 66 66"><rect width="66" height="66" rx="15" fill="url(#rim)"/><rect x="2.500" y="2.500" width="61" height="61" rx="13" fill="#1b1b1d"/><circle cx="33" cy="30" r="24" fill="#a9bccc"/><path fill="#eef4fa" d="M33 30L22 9q11-5 22 0zM33 30l24-5q1 10-3 16zM33 30L24 53q9 3 18 0zM33 30L9 25q-1 9 3 16z"/><circle cx="33" cy="30" r="6" fill="#5f6f80"/><circle cx="33" cy="30" r="2" fill="#fff"/><rect x="23" y="57" width="20" height="4" fill="#cfd3d8"/></svg></div>
  <div class="app"><svg viewBox="0 0 66 66"><rect width="66" height="66" rx="15" fill="#f1edfb"/><path fill="#b9bcd2" d="M27 45h12l2 9H24z"/><path fill="url(#pink)" d="M14 12h38q4 0 4 4l4 26q0 4-4 4H10q-4 0-4-4l4-26q0-4 4-4z"/><path fill="none" stroke="#6b2450" stroke-width="1.800" d="M33 13l14 12M48 15l6 26"/></svg></div>
  <div class="app run"><svg viewBox="0 0 66 66"><rect width="66" height="66" rx="15" fill="url(#mailBlue)"/><rect x="10" y="18" width="46" height="30" rx="4" fill="#f2f2f4"/><path fill="none" stroke="#9a9ca2" stroke-width="1.800" d="M11 20l18 16q4 3 8 0l18-16M11 47l15-14M55 47L40 33"/></svg><em class="wide">15,257</em></div>
  <div class="app"><svg viewBox="0 0 66 66"><clipPath id="mc"><rect width="66" height="66" rx="15"/></clipPath><g clip-path="url(#mc)"><rect width="66" height="66" fill="#6fdb6c"/><path fill="#f07fc0" d="M0 34l18 14v18H0z"/><path fill="#fbc82e" d="M36 66l6-20 24 20z"/><path fill="#fff" d="M0 10l66 46v14L0 26z"/><path fill="#f3f3f3" d="M15 0h21v66H15z"/><path fill="#2f86f6" d="M18 0h14v34H18z"/><path fill="none" stroke="#e6e6e6" stroke-width="8" d="M44 0q2 20 22 22"/></g><circle cx="25" cy="41" r="16" fill="#fff"/><circle cx="25" cy="41" r="13.500" fill="#2680f5"/><path fill="#fff" d="M25 31l7 18-7-5-7 5z"/></svg></div>
  <div class="app"><svg viewBox="0 0 66 66"><rect width="66" height="66" rx="15" fill="#fff"/><g opacity=".85"><ellipse cx="33" cy="18" rx="8.500" ry="14" fill="#fb9a2b"/><ellipse cx="33" cy="18" rx="8.500" ry="14" fill="#f5d932" transform="rotate(45 33 33)"/><ellipse cx="33" cy="18" rx="8.500" ry="14" fill="#b3d44b" transform="rotate(90 33 33)"/><ellipse cx="33" cy="18" rx="8.500" ry="14" fill="#66bf79" transform="rotate(135 33 33)"/><ellipse cx="33" cy="18" rx="8.500" ry="14" fill="#62a7e0" transform="rotate(180 33 33)"/><ellipse cx="33" cy="18" rx="8.500" ry="14" fill="#8a7cc9" transform="rotate(225 33 33)"/><ellipse cx="33" cy="18" rx="8.500" ry="14" fill="#c673b4" transform="rotate(270 33 33)"/><ellipse cx="33" cy="18" rx="8.500" ry="14" fill="#f25b52" transform="rotate(315 33 33)"/></g></svg></div>
  <div class="app"><svg viewBox="0 0 66 66"><rect width="66" height="66" rx="15" fill="url(#green)"/><rect x="10" y="18" width="33" height="29" rx="8" fill="#f4fff5"/><path fill="#dff5e2" d="M45 28l9-8q2-1 2 2v21q0 3-2 2l-9-8z"/></svg></div>
  <div class="app"><svg viewBox="0 0 66 66"><rect width="66" height="66" rx="15" fill="#f8f7f5"/><path fill="#f2554d" d="M15 0h36q15 0 15 15v5H0v-5Q0 0 15 0z"/><text x="33" y="15.500" class="cal-m">MAR</text><text x="33" y="55" class="cal-d">28</text></svg></div>
  <div class="app"><svg viewBox="0 0 66 66"><rect width="66" height="66" rx="13" fill="#001e36"/><text x="33" y="46" class="adobe">LrC</text></svg></div>
  <div class="app run"><svg class="big" viewBox="0 0 76 78"><path fill="#0a4466" d="M0 0h46q12 5 16 14L10 66Q0 56 0 44z"/><path fill="#fff" d="M10 10h48L74 30v20H25Q10 44 10 30z"/><path fill="#1fc9e4" d="M22 22h38q14 4 15 18v37H37Q23 70 22 56V54h21v9l25-16-25-16v9H22z"/><path fill="#fff" d="M10 40h33V31l25 16-25 16v-9H22v10Q10 54 10 46z"/></svg></div>
  <div class="app"><svg viewBox="0 0 66 66"><rect width="66" height="66" rx="15" fill="url(#white)"/><circle cx="33" cy="33" r="28" fill="url(#safari)"/><circle cx="33" cy="33" r="25" fill="none" stroke="#bfe3fb" stroke-width="3" stroke-dasharray="1 2.300"/><path fill="#f23b36" d="M53 17L37 38l-8-8z"/><path fill="#f4f4f6" d="M14 50l15-20 8 8z"/></svg></div>
  <div class="app run"><svg viewBox="0 0 66 66"><rect width="66" height="66" rx="15" fill="#f4f4f4"/><path fill="#e94335" d="M33 33L8.500 19a28 28 0 0 1 49 0z"/><path fill="#fbbc2e" d="M33 33l0-14h24.500A28 28 0 0 1 33 61z"/><path fill="#34a24f" d="M33 61A28 28 0 0 1 8.500 19l13 21 18 6z"/><circle cx="33" cy="33" r="14" fill="#fff"/><circle cx="33" cy="33" r="11" fill="#2f7cf0"/></svg></div>
  <div class="app"><svg viewBox="0 0 66 66"><rect width="66" height="66" rx="13" fill="#001e36"/><text x="33" y="46" class="adobe">Ps</text></svg></div>
  <div class="app"><svg viewBox="0 0 66 66"><rect width="66" height="66" rx="15" fill="url(#white)"/><g fill="none" stroke-width="1.500"><circle cx="13" cy="17" r="5.500" stroke="#1d7df2"/><circle cx="13" cy="33" r="5.500" stroke="#f23d36"/><circle cx="13" cy="50" r="5.500" stroke="#f2902a"/><path stroke="#b8b8b8" d="M25 17h34M25 33h34M25 50h34"/></g><circle cx="13" cy="17" r="3.800" fill="#1d7df2"/><circle cx="13" cy="33" r="3.800" fill="#f23d36"/><circle cx="13" cy="50" r="3.800" fill="#f2902a"/></svg></div>
  <div class="app run"><svg viewBox="0 0 66 66"><rect width="66" height="66" rx="15" fill="url(#white)"/><path fill="#fdc82f" d="M15 0h36q15 0 15 15v2H0v-2Q0 0 15 0z"/><path stroke="#c6c3bd" stroke-width="1.500" d="M0 18.500h66M0 33h66M0 49h66"/></svg></div>
  <div class="app"><svg viewBox="0 0 66 66"><rect width="66" height="66" rx="15" fill="url(#music)"/><path fill="none" stroke="#fff" stroke-width="4" d="M24 48V17l22-5v30"/><path fill="#fff" d="M22 15l26-5v8l-26 5z"/><ellipse cx="19" cy="48.500" rx="7" ry="5.500" fill="#fff"/><ellipse cx="41" cy="44" rx="7" ry="5.500" fill="#fff"/></svg></div>
  <div class="app run"><svg viewBox="0 0 66 66"><rect width="66" height="66" rx="15" fill="url(#tv)"/><use href="#apple" x="8" y="20" width="22" height="23" fill="#fff"/><text x="43" y="43" class="tvt">tv</text></svg></div>
  <div class="app"><svg viewBox="0 0 66 66"><rect width="66" height="66" rx="15" fill="url(#storeBlue)"/><path fill="none" stroke="#fff" stroke-width="5" stroke-linecap="round" d="M37 15L21 42M29 15l19 34M12 40h23M46 40h8M18 47l-2 4"/></svg></div>
  <div class="app run"><svg viewBox="0 0 66 66"><rect width="66" height="66" rx="15" fill="url(#pod)"/><g fill="none" stroke="#fff" stroke-width="3.200"><path d="M20 51a23 23 0 1 1 26 0"/><path d="M24 42a14 14 0 1 1 18 0"/></g><circle cx="33" cy="29" r="5.500" fill="#fff"/><path fill="#fff" d="M27.500 41q0-4 5.500-4t5.500 4l-2 14q-.5 4-3.500 4t-3.500-4z"/></svg></div>
  <div class="app"><svg viewBox="0 0 66 66"><rect width="66" height="66" rx="15" fill="url(#sys)"/><circle cx="33" cy="33" r="27" fill="#3a3b3c"/><circle cx="33" cy="33" r="27" fill="none" stroke="#222" stroke-width="3" stroke-dasharray="2 1.500"/><circle cx="33" cy="33" r="21" fill="none" stroke="#8c8f91" stroke-width="4"/><circle cx="33" cy="33" r="9" fill="none" stroke="#8c8f91" stroke-width="3"/><path stroke="#9a9d9f" stroke-width="4" d="M35 33h20M32 31L22 15M32 35L22 51"/></svg><em>1</em></div>
  <div class="app run"><svg viewBox="0 0 66 66"><rect width="66" height="66" rx="15" fill="#fff"/><path fill="#41a5ee" d="M18 11h36v11H18z"/><path fill="#2b7cd3" d="M18 22h36v11H18z"/><path fill="#185abd" d="M18 33h36v11H18z"/><path fill="#103f91" d="M18 44h36v10H18z"/><rect x="6" y="20" width="24" height="25" rx="2" fill="#185abd"/><text x="18" y="39" class="off">W</text></svg></div>
  <div class="app run"><svg viewBox="0 0 66 66"><rect width="66" height="66" rx="15" fill="url(#rim)"/><rect x="2.500" y="2.500" width="61" height="61" rx="13" fill="#050505"/><rect x="6" y="7" width="54" height="52" rx="7" fill="#15221f"/><path stroke="#2c5048" stroke-width="1" d="M6 22h54M6 36h54M6 48h54M17 7v52M30 7v52M43 7v52M53 7v52"/><path fill="none" stroke="#62d6be" stroke-width="1.800" d="M6 36l6 2 4-2 2-26 3 36 3-8h4q4-7 8-7t7 8q5-4 12 0"/></svg></div>
  <div class="gap g1"></div>
  <div class="app run"><svg viewBox="0 0 66 66"><rect width="66" height="66" rx="15" fill="url(#rim)"/><rect x="2.500" y="2.500" width="61" height="61" rx="13" fill="#050505"/><rect x="6" y="7" width="54" height="52" rx="8" fill="#262626"/><path fill="none" stroke="#fff" stroke-width="2.400" d="M12 13l7 4.500-7 4.500M22 25h9"/></svg></div>
  <div class="app run"><svg viewBox="0 0 66 66"><rect width="66" height="66" rx="15" fill="url(#wa)"/><path fill="none" stroke="#fff" stroke-width="4.500" d="M34 9a23 23 0 1 1-11 43l-12 4 3-12A23 23 0 0 1 34 9z"/><use href="#phone" x="10" y="9" width="48" height="48" fill="#fff"/></svg></div>
  <div class="app run"><svg viewBox="0 0 66 66"><rect width="66" height="66" rx="15" fill="#fff"/><path fill="#21a366" d="M18 11h18v11H18z"/><path fill="#33c481" d="M36 11h18v11H36z"/><path fill="#107c41" d="M18 22h18v22H18z"/><path fill="#21a366" d="M36 22h18v11H36z"/><path fill="#107c41" d="M36 33h18v11H36z"/><path fill="#185c37" d="M18 44h36v10H18z"/><rect x="6" y="20" width="24" height="25" rx="2" fill="#107c41"/><text x="18" y="39" class="off">X</text></svg></div>
  <div class="app run"><svg viewBox="0 0 66 66"><rect width="66" height="66" rx="15" fill="url(#books)"/><path fill="#fff" d="M32 19q-10-7-21-1v32q11-5 21 0zM34 19q10-7 21-1v32q-11-5-21 0z"/></svg></div>
  <div class="app run"><svg viewBox="0 0 66 66"><rect width="66" height="66" rx="10" fill="#fb443e"/><path fill="#fff" d="M12 33l14-14 14 14-14 14z"/><path fill="none" stroke="#fff" stroke-width="4.500" d="M37 20l13 13-13 13"/></svg></div>
  <div class="app run"><svg viewBox="0 0 66 66"><rect width="66" height="66" rx="12" fill="#040f4c"/><circle cx="33" cy="33" r="27" fill="#fff"/><path fill="#040f4c" d="M10 33l16-13v9h14v-9l16 13-16 13v-9H26v9z"/></svg></div>
  <div class="gap g2"></div>
  <div class="app"><svg viewBox="0 0 66 66"><path fill="none" stroke="#ad9fb8" stroke-width="5.500" d="M16 22q0-18 17-18t17 17q0 9-8 15t-8 15"/><path fill="#ad9fb8" d="M31 57h6v8h-6z"/></svg></div>
  <div class="app"><svg class="bin" viewBox="0 0 60 76"><path fill="#e8e8ea" d="M4 16L10 4l7 3 6-7 8 3 8-2 5 5 8 2 3 10-20 6z"/><path fill="#38b7e0" d="M24 9l6 2-4 6z"/><path fill="#7c5a3c" d="M34 6l6 4-3 6zM14 12l6-3v7z"/><path fill="url(#trash)" d="M1 16q29 10 58 0l-7 55q-1 5-22 5T8 71z"/></svg></div>
</footer>
</body>
</html>
```

FILE: styles.css
```css
* { box-sizing: border-box; }
body { margin: 0; width: 2880px; height: 1800px; overflow: hidden; position: relative; background: #1c0748; font-family: Inter, "Liberation Sans", sans-serif; }
h1, h6, p { margin: 0; }
svg { flex: none; display: block; }
.defs, .wallpaper { position: absolute; left: 0; top: 0; }
.wallpaper { width: 2880px; height: 1800px; }

/* menu bar */
.menubar { position: absolute; left: 0; top: 0; width: 2880px; height: 48px; display: flex; justify-content: space-between; background: linear-gradient(90deg, #4c1a90 0, #3f1a9b 25%, #3416a6 48%, #2f139c 75%, #2c128c 100%); color: #eee8fa; font-size: 25px; line-height: 46px; text-shadow: 0 2px 5px rgba(0,0,0,.3); font-weight: 500; }
.menus { display: flex; align-items: center; gap: 41px; padding-left: 38px; height: 47px; letter-spacing: .05px; }
.menus b { letter-spacing: .85px; }
.apple-mark { width: 29px; height: 31px; fill: #eee8fa; margin-right: -2px; }
.status { display: grid; grid-template-columns: 76px 76px 76px 68px 54px 64px 92px 42px 86px 40px 304px; align-items: center; justify-items: center; fill: #eee8fa; height: 48px; }
.pct { justify-self: end; padding-right: 3px; font-size: 24px; letter-spacing: -1.4px; }
.status time { justify-self: start; padding-left: 26px; white-space: nowrap; letter-spacing: .15px; }
.hdd { position: absolute; left: 2718px; top: 64px; width: 76px; height: 80px; }

/* windows */
.window { position: absolute; overflow: hidden; border-radius: 22px; }
.finder { left: 27px; top: 50px; width: 2584px; height: 1633px; background: #242127; border: 2px solid #4a474e; box-shadow: 0 0 0 1px #050308, 0 16px 50px rgba(0,0,0,.5); }
.finder-side { width: 584px; height: 1629px; background: linear-gradient(160deg, #2a2630, #1a181d); border-right: 3px solid #000; position: relative; padding: 77px 0 0 17px; color: #56535b; }
.tl { position: absolute; left: 37px; top: 39px; width: 24px; height: 24px; border-radius: 50%; background: #47444c; }
.finder-side h6 { height: 64px; padding: 32px 0 0 13px; font-size: 22px; line-height: 26px; font-weight: 700; }
.finder-side p { height: 56px; display: flex; align-items: center; padding-left: 18px; border-radius: 10px; }
.finder-side p.on { background: #38353c; }
.finder-side p svg { width: 28px; height: 28px; fill: none; stroke: #223f6b; stroke-width: 2; }
.finder-side p.dim svg { stroke: #3c3a42; }
.tag { width: 20px; height: 20px; border-radius: 50%; margin-left: 3px; }
.t0 { border: 2px solid #3c3a42; } .t1 { background: #6b4a1e; } .t2 { background: #6b2c30; } .t3 { background: #245a30; } .t4 { background: #1f4068; } .t5 { background: #553163; } .t6 { background: #3e3c43; } .t7 { background: #6b5a1e; }
.finder-status { position: absolute; right: 0; bottom: 0; width: 1997px; height: 55px; border-top: 2px solid #000; background: linear-gradient(90deg, #121115 0 97%, #232026); color: #39363d; font-size: 23px; line-height: 56px; text-align: center; }
.preview { left: 2400px; top: 150px; width: 480px; height: 1362px; background: #1e1e1e; border: 2px solid #4d4852; border-top-color: #6a6570; box-shadow: 0 0 0 1px #050308, 0 16px 50px rgba(0,0,0,.45); }
.preview-bar { height: 104px; background: #2d2833; border-bottom: 2px solid #000; padding: 22px 23px 0 0; }
.preview-field { height: 56px; border: 2px solid #39343f; border-radius: 12px; }
.preview-body { display: flex; justify-content: space-between; height: 1257px; }
.preview-page { width: 402px; height: 680px; margin-top: 62px; background: linear-gradient(90deg, #2c2c2c 45%, #464646 75%); }
.preview-scroll { width: 28px; background: #2a2a2a; border-left: 2px solid #3b3b3b; }
.chrome { left: 74px; top: 50px; width: 2516px; height: 1610px; background: #202322; box-shadow: 0 0 0 2px #000, 0 20px 60px rgba(0,0,0,.55), 0 0 50px rgba(0,0,0,.35); }

/* tabs */
.tabstrip { display: flex; align-items: center; height: 80px; padding-left: 42px; box-shadow: inset 0 2px #656766; color: #c7c7c7; }
.lights { display: flex; gap: 16px; margin-right: 32px; }
.lights i { width: 24px; height: 24px; border-radius: 50%; background: #ff5f57; }
.lights i:nth-child(2) { background: #febc2e; }
.lights i:nth-child(3) { background: #28c840; }
.tab { width: 210px; height: 80px; display: flex; align-items: center; padding-left: 22px; position: relative; }
.tab > svg { width: 32px; height: 32px; }
.tab > svg.sm { width: 28px; height: 28px; margin: 0 2px; }
.tab span { width: 70px; margin: 0 2px 0 16px; overflow: hidden; white-space: nowrap; font-size: 23.5px; line-height: 32px; -webkit-mask-image: linear-gradient(90deg, #000 50%, transparent 100%); mask-image: linear-gradient(90deg, #000 50%, transparent 100%); }
.tab > svg.x { width: 16px; height: 16px; margin-left: 22px; }
.tab::after { content: ""; position: absolute; right: -1px; top: 24px; width: 3px; height: 32px; background: #454847; }
.tab.nosep::after { display: none; }
.tab.active { color: #e3e3e3; z-index: 0; }
.tab.active::before { content: ""; position: absolute; z-index: -1; left: 6px; right: 7px; top: 12px; bottom: 0; background: #3c3c3c; border-radius: 20px 20px 0 0; }
.tab.active::after { z-index: -2; left: -14px; right: -13px; top: 60px; width: auto; height: 20px; background: radial-gradient(circle at 0 0, transparent 19px, #3c3c3c 20px) left / 20px 20px no-repeat, radial-gradient(circle at 100% 0, transparent 19px, #3c3c3c 20px) right / 20px 20px no-repeat; }
.badge-n { font: 700 17px Inter, sans-serif; fill: #fff; text-anchor: middle; }
.newtab { width: 28px; height: 28px; margin-left: 20px; }
.tabdrop { width: 56px; height: 56px; border-radius: 18px; background: #3c3c3c; margin-left: 122px; display: flex; align-items: center; justify-content: center; }

/* address bar */
.toolbar { height: 94px; background: #3c3c3c; border-bottom: 2px solid #4a4a4a; border-radius: 20px 20px 0 0; display: flex; align-items: center; padding-left: 8px; color: #c7c7c7; }
.tb { width: 72px; display: flex; justify-content: center; }
.tb svg { width: 34px; height: 34px; }
.tb.off { color: #777; }
.tb .flip { transform: scaleX(-1); }
.tb .zb { width: 38px; height: 38px; }
.tb .mk { width: 32px; height: 32px; }
.tb .kebab { width: 40px; height: 40px; }
.tb.first { margin-left: 16px; }
.omnibox { width: 1783px; height: 68px; margin-left: 17px; border-radius: 34px; background: #282828; display: flex; align-items: center; padding: 0 30px 0 9px; }
.site { width: 48px; height: 48px; border-radius: 50%; background: #3c3c3c; display: flex; align-items: center; justify-content: center; }
.url { margin-left: 16px; flex: 1; font-size: 28px; line-height: 40px; letter-spacing: -.29px; }
.url b { font-weight: 400; color: #e8e8e8; }
.bm { width: 36px; height: 36px; }
.vsep { width: 4px; height: 32px; margin: 0 16px; background: #5d5d5d; border-radius: 2px; }

/* gmail */
.gmail { display: grid; grid-template-columns: 512px 1892px 112px; grid-template-rows: 128px 1276px; height: 1436px; background: #f9fbff; font-family: Roboto, "Open Sans", sans-serif; position: relative; }
.head { grid-column: 1 / 4; display: flex; align-items: center; }
.burger { width: 36px; height: 30px; margin-left: 54px; }
.logo { width: 60px; height: 45px; margin-left: 40px; }
.brand { font: 400 43.5px/52px Lato, sans-serif; color: #444746; margin-left: 22px; width: 300px; letter-spacing: .5px; }
.search { width: 1440px; height: 96px; border-radius: 48px; background: #e9eef6; display: flex; align-items: center; padding: 0 33px 0 25px; color: #5f6368; font-size: 32px; fill: #444746; }
.search svg { width: 46px; height: 46px; }
.search span { flex: 1; margin: -2px 0 0 17px; letter-spacing: .15px; }
.search .tune { width: 46px; height: 46px; margin-top: -1px; }
.hicons { display: flex; align-items: center; fill: #5f6368; margin-left: 200px; gap: 40px; }
.hicons svg { width: 48px; height: 48px; }
.hicons .avatar { width: 62px; height: 62px; }
.nav { display: flex; flex-direction: column; fill: #444746; color: #202124; font-size: 28px; letter-spacing: .45px; }
.compose { width: 285px; height: 112px; margin: 16px 0 32px 16px; border-radius: 32px; background: #c2e7ff; display: flex; align-items: center; color: #001d35; font-weight: 500; letter-spacing: .85px; }
.compose svg { width: 37px; height: 42px; margin: 0 37px 0 38px; fill: #000; }
.compose span { margin-top: -2px; }
.row { display: flex; align-items: center; height: 64px; width: 480px; padding: 0 0 2px 54px; color: #202124; }
.row svg { width: 36px; height: 36px; margin: 2px 38px 0 0; color: #444746; }
.row b { font-weight: 700; letter-spacing: 1px; }
.row .n { margin-left: auto; padding-right: 23px; font-size: 25px; letter-spacing: .3px; }
.row span.n { color: #5f6368; }
.row.sel { background: #d3e3fd; border-radius: 0 32px 32px 0; color: #001d35; fill: #041e49; }
.labels { display: flex; justify-content: space-between; align-items: center; height: 64px; margin: 44px 52px 0 52px; font-size: 32px; letter-spacing: .9px; }
.labels svg { width: 32px; height: 32px; color: #444746; }
.upgrade { width: 432px; height: 64px; margin: auto 0 0 40px; background: #fff; border-radius: 32px; display: flex; align-items: center; fill: #1f1f1f; }
.medal { width: 27px; height: 34px; margin-left: 36px; }
.upgrade span { margin-left: 37px; flex: 1; letter-spacing: .75px; }
.arr { width: 34px; height: 34px; margin-right: 24px; }

.panel { background: #fff; border-radius: 32px; overflow: hidden; }
.acts { height: 96px; width: 1854px; margin-left: 3px; display: flex; align-items: center; padding-left: 31px; fill: #444746; color: #444746; box-shadow: 0 2px 3px rgba(0,0,0,.26); clip-path: inset(0 0 -8px 0); position: relative; z-index: 1; }
.acts svg { width: 36px; height: 36px; margin-right: 52px; }
.acts svg.a1 { width: 34px; height: 34px; margin: 0 76px 0 2px; }
.acts i { width: 2px; height: 40px; background: #e4e9f0; margin: 0 42px 0 -12px; }
.acts .a8 { margin: 0 0 0 -8px; }
.count { margin-left: 923px; width: 101px; font-size: 22.6px; white-space: nowrap; color: #5f6368; }
.acts svg.pg { width: 32px; height: 32px; margin: 0 0 0 42px; }
.acts svg.nx { margin-left: 47px; }
.mail { display: flex; height: 1180px; padding-left: 144px; position: relative; }
.mail article { width: 1684px; border: solid #f3f2f0; border-width: 0 242px; padding: 135px 112px 0; font-family: "Liberation Sans", Arial, sans-serif; color: #2d2d2d; height: 1180px; }
article h1 { font-size: 40px; line-height: 48px; white-space: nowrap; }
.sub { font-size: 28px; line-height: 40px; margin-top: 16px; color: #595959; white-space: nowrap; }
.name { display: block; font-size: 32px; font-weight: 700; line-height: 40px; margin-top: 74px; text-decoration: underline; text-decoration-thickness: 3px; text-underline-offset: 4px; }
.chips { display: flex; gap: 9px; margin-top: 18px; width: 980px; }
.chips span { height: 58px; border: 2px solid #e4e2e0; border-radius: 15px; padding-left: 16px; font-size: 28px; line-height: 55px; white-space: nowrap; }
.chips span::before { content: ""; display: inline-block; width: 16px; height: 16px; border-radius: 50%; background: #4477d2; margin-right: 8px; }
.c1 { width: 283px; } .c2 { width: 263px; } .c3 { width: 395px; }
.chips .c2, .chips .c3 { padding-left: 15px; }
.review { width: 544px; height: 96px; margin: 52px 0 0 4px; border-radius: 24px; background: #0b53c8; color: #fff; font-size: 32px; font-weight: 700; line-height: 96px; text-align: center; }
.resume { display: flex; align-items: center; margin: 52px 0 0 142px; font-size: 32px; font-weight: 700; line-height: 40px; gap: 13px; white-space: nowrap; }
.resume svg { margin-top: -3px; }
hr { border: 0; height: 2px; background: #e1dfdd; margin: 0; }
.h1r { margin-top: 80px; }
.manage { display: block; margin-top: 130px; font-size: 28px; line-height: 40px; color: #595959; text-decoration: underline; text-decoration-thickness: 2px; text-underline-offset: 3px; }
.h2r { margin-top: 56px; }
.foot { display: flex; padding-top: 64px; width: 980px; }
.engage { width: 394px; margin-top: 1px; font-size: 28px; line-height: 42px; white-space: nowrap; }
.engage span { display: block; font-size: 24px; line-height: 32px; margin-top: 9px; color: #595959; }
.badge { height: 80px; border-radius: 10px; background: #000; border: 2px solid #a6a6a6; display: flex; align-items: center; color: #fff; white-space: nowrap; }
.badge div { display: flex; flex-direction: column; font-family: Inter, sans-serif; }
.badge small { font-size: 17px; line-height: 18px; letter-spacing: .2px; }
.badge strong { font-weight: 500; font-size: 33px; line-height: 34px; letter-spacing: -.9px; }
.as { width: 240px; padding-left: 17px; fill: #fff; gap: 12px; }
.gp { width: 268px; margin-left: 24px; padding-left: 17px; gap: 14px; background: #100f0d; }
.gp small { font-size: 18.5px; line-height: 20px; letter-spacing: -.85px; }
.gp strong { font-family: Lato, sans-serif; font-size: 36px; letter-spacing: -1.9px; }
.thumb { position: absolute; right: 0; top: 201px; width: 22px; height: 460px; background: #cbcbcb; border: solid #b5b5b5; border-width: 2px 0 2px 2px; }

.side { display: flex; flex-direction: column; align-items: center; padding-top: 36px; }
.side svg { width: 40px; height: 40px; margin-bottom: 72px; }
.side i { width: 40px; height: 2px; background: #dcdfe3; margin-top: -4px; }
.side .sp { width: 36px; height: 36px; margin: 70px 0 0; }
.side .sc { width: 34px; height: 34px; margin: auto 0 7px; }
.cal31 { font: 700 15px Roboto, sans-serif; fill: #4285f4; text-anchor: middle; }
.shade { position: absolute; left: 0; right: 0; bottom: 0; height: 90px; background: linear-gradient(transparent, rgba(0,0,0,.025) 50%, rgba(0,0,0,.09)); border-radius: 0 0 22px 22px; }

/* dock */
.dock { position: absolute; left: 107px; top: 1686px; width: 2667px; height: 104px; border-radius: 32px; border: 2px solid rgba(255,255,255,.2); background: linear-gradient(90deg, #1d1436 0, #20153f 38%, #26154c 60%, #4a1468 68%, #49185f 80%, #2b1549 88%, #241446 100%); display: flex; padding: 14px 0 0 2px; }
.app { width: 86px; height: 86px; display: flex; justify-content: center; position: relative; }
.app > svg { width: 66px; height: 66px; }
.app > svg.big { width: 76px; height: 78px; margin-top: -8px; }
.app > svg.bin { width: 60px; height: 76px; margin-top: -7px; }
.run::after { content: ""; position: absolute; left: 39px; top: 76px; width: 8px; height: 8px; border-radius: 50%; background: #a893c4; }
.app em { position: absolute; left: 56px; top: -8px; width: 31px; height: 30px; border-radius: 15px; background: #f23d3f; color: #fff; font: 400 19px/30px Inter, sans-serif; text-align: center; }
.app em.wide { left: 28px; width: 56px; letter-spacing: -1px; font-size: 18px; }
.gap { width: 38px; height: 86px; background: linear-gradient(#8c6aa5, #8c6aa5) center 0 / 2px 74px no-repeat; }
.cal-m { font: 600 15px Inter, sans-serif; fill: #fff; text-anchor: middle; }
.cal-d { font: 300 38px Inter, sans-serif; fill: #2b2b2b; text-anchor: middle; letter-spacing: -1px; }
.adobe { font: 700 33px "Open Sans", sans-serif; fill: #31a8ff; text-anchor: middle; letter-spacing: -1px; }
.tvt { font: 500 27px Inter, sans-serif; fill: #fff; text-anchor: middle; }
.off { font: 700 19px "Open Sans", sans-serif; fill: #fff; text-anchor: middle; }
```
